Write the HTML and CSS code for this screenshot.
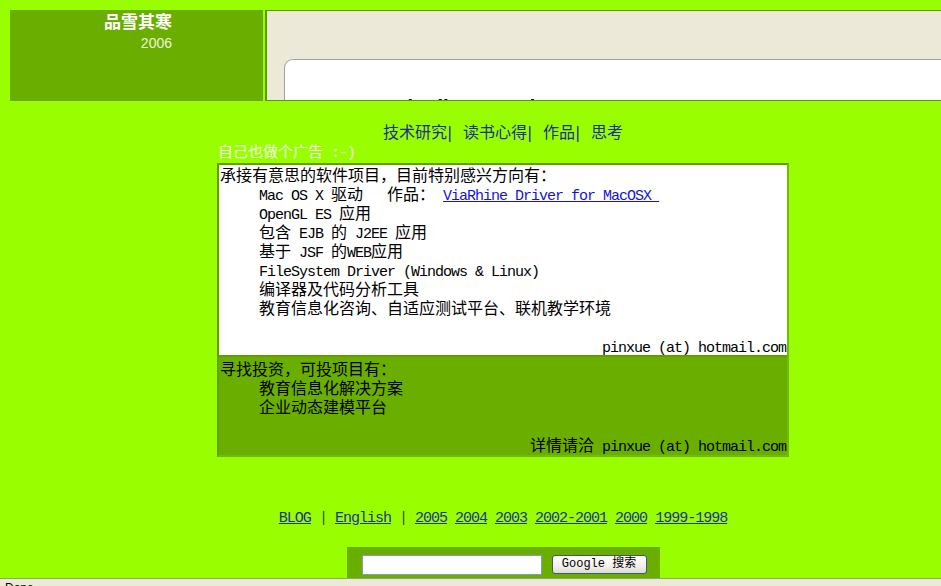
FILE: index.html
```html
<!DOCTYPE html>
<html lang="zh">
<head>
<meta charset="utf-8">
<title>品雪其寒</title>
<link rel="stylesheet" href="styles.css">
</head>
<body>
<div class="top">
  <div class="brand">
    <div class="title">品雪其寒</div>
    <div class="year">2006</div>
  </div>
  <div class="frame">
    <div class="card">
      <div class="card-head">Bloglines Feeds</div>
    </div>
  </div>
</div>

<div class="main">
  <div class="nav"><a href="#">技术研究</a><span class="bar">|</span><a href="#">读书心得</a><span class="bar">|</span><a href="#">作品</a><span class="bar">|</span><a href="#">思考</a></div>
  <div class="adlabel">自己也做个广告<span class="en"> :-)</span></div>
  <div class="adbox">
    <div class="cell cell-white">
      <div class="line">承接有意思的软件项目，目前特别感兴方向有：</div>
      <div class="line ind"><span class="en">Mac OS X </span>驱动<span class="en">   </span>作品：<span class="en"> </span><a class="en lk" href="#">ViaRhine Driver for MacOSX </a></div>
      <div class="line ind"><span class="en">OpenGL ES </span>应用</div>
      <div class="line ind">包含<span class="en"> EJB </span>的<span class="en"> J2EE </span>应用</div>
      <div class="line ind">基于<span class="en"> JSF </span>的<span class="en">WEB</span>应用</div>
      <div class="line ind"><span class="en">FileSystem Driver (Windows &amp; Linux)</span></div>
      <div class="line ind">编译器及代码分析工具</div>
      <div class="line ind">教育信息化咨询、自适应测试平台、联机教学环境</div>
      <div class="line">&nbsp;</div>
      <div class="line right"><span class="en">pinxue (at) hotmail.com</span></div>
    </div>
    <div class="cell cell-green">
      <div class="line">寻找投资，可投项目有：</div>
      <div class="line ind">教育信息化解决方案</div>
      <div class="line ind">企业动态建模平台</div>
      <div class="line">&nbsp;</div>
      <div class="line right">详情请洽<span class="en"> pinxue (at) hotmail.com</span></div>
    </div>
  </div>

  <div class="links en"><a href="#">BLOG</a> <span class="sep">|</span> <a href="#">English</a> <span class="sep">|</span> <a href="#">2005</a> <a href="#">2004</a> <a href="#">2003</a> <a href="#">2002-2001</a> <a href="#">2000</a> <a href="#">1999-1998</a></div>

  <form class="search" action="#">
    <input class="q" type="text">
    <button class="btn" type="button">Google 搜索</button>
  </form>
</div>

<div class="status">Done</div>
</body>
</html>
```

FILE: styles.css
```css
html, body {
  margin: 0;
  padding: 0;
}
body {
  background: #99ff00;
  font-family: "Noto Sans CJK SC", sans-serif;
  font-size: 16px;
  color: #000;
  overflow: hidden;
  height: 586px;
}
.en {
  font-family: "Liberation Mono", "Noto Sans CJK SC", monospace;
  font-size: 15px;
  letter-spacing: -1px;
  line-height: 1;
}

/* top */
.top {
  display: flex;
  padding: 10px 0 0 10px;
  height: 91px;
}
.brand {
  width: 253px;
  flex: none;
  box-sizing: border-box;
  background: #6aae00;
  padding: 1px 91px 0 0;
  text-align: right;
}
.title {
  color: #fff;
  font-weight: bold;
  font-size: 17px;
  line-height: 20px;
}
.year {
  font-family: "Liberation Sans", sans-serif;
  font-size: 14px;
  line-height: 16px;
  color: #eef6dc;
  margin-top: 4px;
}
.frame {
  flex: 1;
  margin-left: 2px;
  background: #ece9d8;
  border-top: 1px solid #5c9c00;
  border-left: 2px solid #5c9c00;
  border-bottom: 1px solid #5c9c00;
  overflow: hidden;
  padding: 48px 0 0 17px;
}
.card {
  background: #fff;
  border: 1px solid #a0a0a0;
  border-right: none;
  border-radius: 9px 0 0 0;
  height: 120px;
  padding: 35px 0 0 108px;
}
.card-head {
  font-family: "Liberation Sans", sans-serif;
  font-weight: bold;
  font-size: 20px;
  line-height: 24px;
  color: #000;
}

/* main */
.main {
  margin-left: 217px;
  width: 572px;
}
.nav {
  margin-top: 21px;
  text-align: center;
  line-height: 19px;
  color: #1b2f97;
}
.nav a {
  color: #1b2f97;
  text-decoration: none;
}
.bar {
  display: inline-block;
  width: 16px;
  text-align: left;
  font-family: "DejaVu Sans", sans-serif;
  font-size: 16px;
  line-height: 1;
  color: #1b2f97;
}
.adlabel {
  font-size: 15px;
  line-height: 19px;
  color: #f2fbe4;
  padding-left: 1px;
}
.adbox {
  margin-top: 2px;
  border: 2px solid #73bd00;
  border-top-color: #5f9f00;
  border-left-color: #5f9f00;
}
.cell {
  padding: 0 1px;
}
.cell-white {
  background: #fff;
  border-bottom: 2px solid #5f9f00;
}
.cell-green {
  background: #6aae00;
  padding-top: 2px;
  padding-bottom: 1px;
}
.line {
  line-height: 19px;
  height: 19px;
  white-space: pre;
}
.ind {
  padding-left: 39px;
}
.right {
  text-align: right;
}
.lk {
  color: #1414d8;
  text-decoration: underline;
}

.links {
  display: block;
  margin-top: 52px;
  text-align: center;
  line-height: 19px;
  white-space: pre;
}
.links a {
  color: #1c3494;
  text-decoration: underline;
}
.sep {
  color: #3a4a6a;
}

.search {
  margin: 19px auto 0;
  width: 313px;
  box-sizing: border-box;
  background: #6aae00;
  padding: 8px 0 8px 15px;
  display: flex;
  gap: 10px;
  align-items: flex-start;
}
.q {
  width: 180px;
  height: 20px;
  box-sizing: border-box;
  border: 1px solid #7f9db9;
  background: #fff;
  margin: 0;
  padding: 0 2px;
}
.btn {
  width: 95px;
  height: 19px;
  box-sizing: border-box;
  margin: 0;
  padding: 0;
  border: 1px solid #3c5a78;
  border-radius: 3px;
  background: linear-gradient(#ffffff, #f1f0ea 60%, #dedcd0);
  font-family: "Liberation Mono", "Noto Sans CJK SC", monospace;
  font-size: 12px;
  line-height: 17px;
  color: #000;
}

.status {
  position: fixed;
  left: 0;
  right: 0;
  bottom: 0;
  height: 7px;
  border-top: 1px solid #8aa866;
  background: #ece9d8;
  font-family: "Liberation Sans", sans-serif;
  font-size: 12px;
  line-height: 18px;
  padding-left: 5px;
  overflow: hidden;
  color: #000;
}
```
